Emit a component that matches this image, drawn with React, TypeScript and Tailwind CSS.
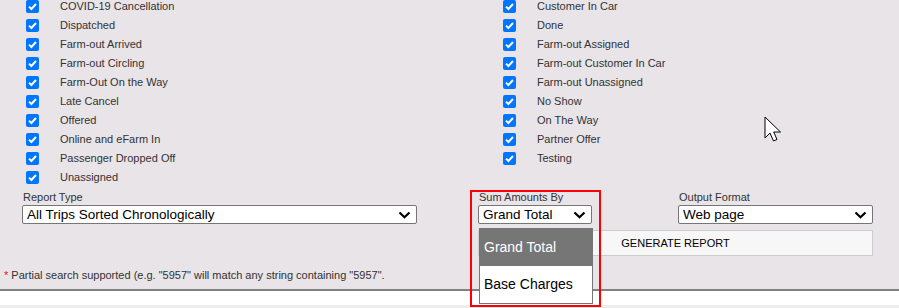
import React from 'react';

const leftStatuses = [
  'COVID-19 Cancellation',
  'Dispatched',
  'Farm-out Arrived',
  'Farm-out Circling',
  'Farm-Out On the Way',
  'Late Cancel',
  'Offered',
  'Online and eFarm In',
  'Passenger Dropped Off',
  'Unassigned',
];

const rightStatuses = [
  'Customer In Car',
  'Done',
  'Farm-out Assigned',
  'Farm-out Customer In Car',
  'Farm-out Unassigned',
  'No Show',
  'On The Way',
  'Partner Offer',
  'Testing',
];

const uiFont = { fontFamily: '"Liberation Sans", Arial, sans-serif' };

function Check() {
  return (
    <span className="w-[13px] h-[13px] rounded-[2px] bg-[#0075ff] flex items-center justify-center shrink-0">
      <svg width="11" height="11" viewBox="0 0 11 11" aria-hidden>
        <path d="M2 5.6L4.4 8 9 3" fill="none" stroke="#fff" strokeWidth="2" />
      </svg>
    </span>
  );
}

function StatusRow({ label }: { label: string }) {
  return (
    <label className="flex items-center h-[19px]">
      <span className="w-[34px] shrink-0">
        <Check />
      </span>
      <span className="text-[11px] text-[#333] whitespace-nowrap">{label}</span>
    </label>
  );
}

function Chevron() {
  return (
    <svg width="13" height="8" viewBox="0 0 13 8" aria-hidden className="shrink-0">
      <path d="M1.5 1.5L6.5 6.2 11.5 1.5" fill="none" stroke="#000" strokeWidth="2.2" />
    </svg>
  );
}

function FakeSelect({ value, width }: { value: string; width: string }) {
  return (
    <div
      className={`${width} h-[19px] bg-white border border-[#767676] rounded-[2px] flex items-center justify-between pl-[4px] pr-[5px]`}
    >
      <span className="text-[13.5px] leading-none text-black whitespace-nowrap">{value}</span>
      <Chevron />
    </div>
  );
}

function Field({ label, value, width }: { label: string; value: string; width: string }) {
  return (
    <div className="flex flex-col">
      <span className="text-[11px] leading-[15px] h-[15px] pl-[1px] text-[#333]">{label}</span>
      <FakeSelect value={value} width={width} />
    </div>
  );
}

export default function App() {
  return (
    <div className="relative w-[899px] h-[308px] overflow-hidden bg-[#e8e4e8]" style={uiFont}>
      {/* statuses */}
      <div className="grid grid-cols-[477px_1fr] pl-[26px] -mt-[3px]">
        <div className="flex flex-col">
          {leftStatuses.map((s) => (
            <StatusRow key={s} label={s} />
          ))}
        </div>
        <div className="flex flex-col">
          {rightStatuses.map((s) => (
            <StatusRow key={s} label={s} />
          ))}
        </div>
      </div>

      {/* report options */}
      <div className="flex pl-[22px] mt-[3px]">
        <Field label="Report Type" value="All Trips Sorted Chronologically" width="w-[395px]" />
        <div className="ml-[61px] flex flex-col">
          <div className="flex gap-[86px]">
            <Field label="Sum Amounts By" value="Grand Total" width="w-[114px]" />
            <Field label="Output Format" value="Web page" width="w-[195px]" />
          </div>
          <button className="mt-[6px] w-[395px] h-[26px] bg-[#f7f7f7] border border-[#cccccc] text-[11px] text-black">
            GENERATE REPORT
          </button>
        </div>
      </div>

      <p className="mt-[12px] pl-[4px] text-[11px] text-[#333] leading-[14px]">
        <span className="text-[#e02020]">*</span> Partial search supported (e.g. "5957" will match any string containing "5957".
      </p>

      {/* page divider */}
      <div className="mt-[7px] h-[2px] bg-[#808080]" />
      <div className="h-[14px] bg-white" />
      <div className="h-[10px] bg-[#ededed]" />

      {/* open dropdown list */}
      <div className="absolute left-[479px] top-[228px] w-[114px] h-[76px] bg-white border border-[#767676] flex flex-col">
        <div className="h-[37px] bg-[#767676] text-white text-[14px] flex items-center pl-[4px]">Grand Total</div>
        <div className="h-[37px] text-black text-[14px] flex items-center pl-[4px]">Base Charges</div>
      </div>

      {/* annotation box */}
      <div className="absolute left-[470px] top-[190px] w-[131px] h-[117px] border-2 border-[#ff0000]" />

      {/* mouse pointer */}
      <svg className="absolute left-[764px] top-[116px]" width="20" height="28" viewBox="0 0 20 28" aria-hidden>
        <path
          d="M1 1 L1 22 L6 17 L9.5 25 L13 23.5 L9.7 16 L16.5 16 Z"
          fill="#fff"
          stroke="#000"
          strokeWidth="1"
          strokeLinejoin="round"
        />
      </svg>
    </div>
  );
}
